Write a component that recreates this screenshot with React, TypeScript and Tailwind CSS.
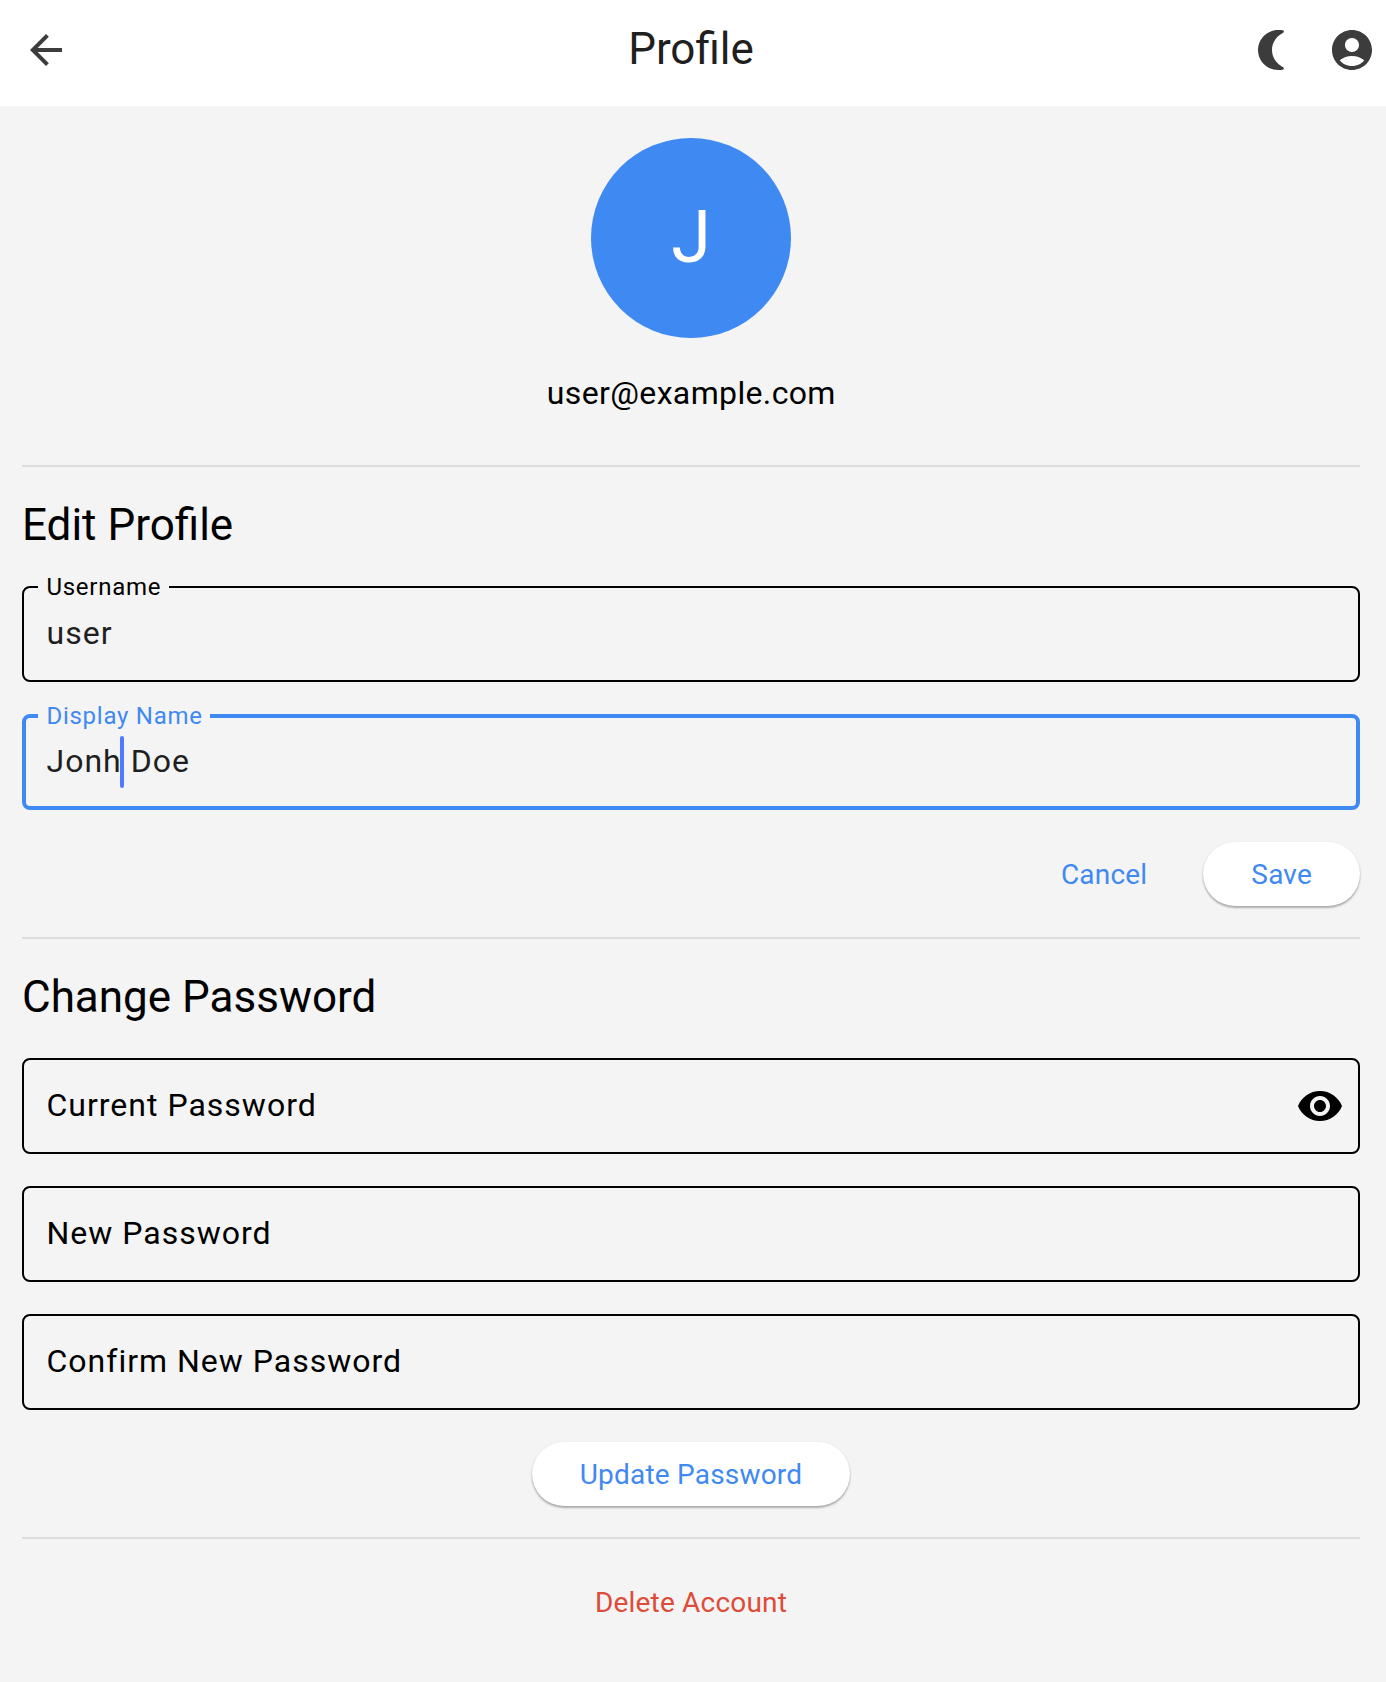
import type { ReactNode } from "react"

function Icon({ d, className }: { d: string; className?: string }) {
  return (
    <svg viewBox="0 0 24 24" fill="currentColor" className={`size-12 shrink-0 ${className ?? ""}`}>
      <path d={d} />
    </svg>
  )
}

const arrowBack = "M20 11H7.83l5.59-5.59L12 4l-8 8 8 8 1.41-1.41L7.83 13H20v-2z"
const moon =
  "M15 2C9.48 2 5 6.48 5 12s4.48 10 10 10c.85 0 1.65-.03 2.4-.12.65-.1.72-.98.15-1.3C14.4 18.9 12 15.9 12 12s2.4-6.9 5.55-8.58c.57-.32.5-1.2-.15-1.3C16.65 2.03 15.85 2 15 2z"
const account =
  "M12 2C6.48 2 2 6.48 2 12s4.48 10 10 10 10-4.48 10-10S17.52 2 12 2zm0 4c1.93 0 3.5 1.57 3.5 3.5S13.93 13 12 13s-3.5-1.57-3.5-3.5S10.07 6 12 6zm0 14c-2.03 0-4.43-.82-6.14-2.88a9.947 9.947 0 0 1 12.28 0C16.43 19.18 14.03 20 12 20z"
const visibility =
  "M12 4.5C7 4.5 2.73 7.61 1 12c1.73 4.39 6 7.5 11 7.5s9.27-3.11 11-7.5c-1.73-4.39-6-7.5-11-7.5zM12 17c-2.76 0-5-2.24-5-5s2.24-5 5-5 5 2.24 5 5-2.24 5-5 5zm0-8c-1.66 0-3 1.34-3 3s1.34 3 3 3 3-1.34 3-3-1.34-3-3-3z"

function Divider() {
  return <div className="h-0.5 w-full bg-[#dcdcdc]" />
}

function Heading({ children }: { children: ReactNode }) {
  return <h2 className="mt-[30px] text-[44px] leading-[56px] text-black">{children}</h2>
}

function FilledField({ label, focused, children }: { label: string; focused?: boolean; children: ReactNode }) {
  return (
    <div
      className={`relative flex h-24 items-center rounded-lg pb-0.5 ${
        focused ? "border-4 border-[#3f89f2] px-[20.5px]" : "border-2 border-black px-[22.5px]"
      }`}
    >
      <span
        className={`absolute bg-[#f4f4f4] pr-[7.6px] pl-[8.4px] text-2xl leading-7 tracking-[0.75px] ${
          focused ? "-top-4 left-3 text-[#3f89f2]" : "-top-[15px] left-3.5 text-black"
        }`}
      >
        {label}
      </span>
      <span className="relative text-[32px] leading-12 tracking-[1px] text-[#1f1f1f]">{children}</span>
    </div>
  )
}

function EmptyField({ label, children }: { label: string; children?: ReactNode }) {
  return (
    <div className="flex h-24 items-center justify-between rounded-lg border-2 border-black pr-3.5 pb-0.5 pl-[22.5px]">
      <span className="text-[32px] leading-12 tracking-[1px] text-black">{label}</span>
      {children}
    </div>
  )
}

function PillButton({ children }: { children: ReactNode }) {
  return (
    <button className="h-16 rounded-full bg-white px-12 pt-0.5 text-[28px] leading-10 tracking-[0.2px] text-[#3f89f2] shadow-[0_2px_2px_rgba(0,0,0,0.24),0_1px_3px_rgba(0,0,0,0.12)]">
      {children}
    </button>
  )
}

export default function App() {
  return (
    <div className="min-h-[1682px] w-full bg-[#f4f4f4] font-['Roboto',sans-serif]">
      <header className="h-[106px] bg-white">
        <div className="grid h-[100px] w-[1382px] grid-cols-[1fr_auto_1fr] items-center pr-1.5 pl-[22px]">
          <button className="justify-self-start text-[#3c3c3c]">
            <Icon d={arrowBack} />
          </button>
          <h1 className="-ml-4 pb-0.5 text-[44px] leading-14 text-[#1f1f1f]">Profile</h1>
          <div className="flex gap-8 justify-self-end text-[#3c3c3c]">
            <Icon d={moon} />
            <Icon d={account} />
          </div>
        </div>
      </header>

      <main className="flex w-[1382px] flex-col px-[22px] pt-8">
        <div className="flex flex-col items-center">
          <div className="flex size-[200px] items-center justify-center rounded-full bg-[#3f89f2] text-[72px] leading-none text-white">
            J
          </div>
          <p className="mt-[31px] pl-[0.6px] text-[32px] leading-12 tracking-[0.36px] text-black">user@example.com</p>
        </div>

        <div className="mt-12">
          <Divider />
        </div>
        <section className="flex flex-col">
          <Heading>Edit Profile</Heading>
          <div className="mt-[33px] flex flex-col gap-8">
            <FilledField label="Username">user</FilledField>
            <FilledField label="Display Name" focused>
              Jonh
              <span className="absolute -top-px left-[73.5px] h-[52px] w-1 rounded-full bg-[#5079ff]" /> Doe
            </FilledField>
          </div>
          <div className="mt-8 mb-[31px] flex justify-end gap-8">
            <button className="h-16 px-6 pt-0.5 text-[28px] leading-10 tracking-[0.2px] text-[#3f89f2]">Cancel</button>
            <PillButton>Save</PillButton>
          </div>
        </section>

        <Divider />
        <section className="flex flex-col">
          <Heading>Change Password</Heading>
          <div className="mt-[33px] flex flex-col gap-8">
            <EmptyField label="Current Password">
              <Icon d={visibility} className="relative top-px text-black" />
            </EmptyField>
            <EmptyField label="New Password" />
            <EmptyField label="Confirm New Password" />
          </div>
          <div className="mt-8 mb-[31px] flex justify-center">
            <PillButton>Update Password</PillButton>
          </div>
        </section>

        <Divider />
        <div className="mt-[31px] flex justify-center">
          <button className="h-16 px-6 pt-0.5 text-[28px] leading-10 tracking-[0.2px] text-[#dd4b39]">Delete Account</button>
        </div>
      </main>
    </div>
  )
}
